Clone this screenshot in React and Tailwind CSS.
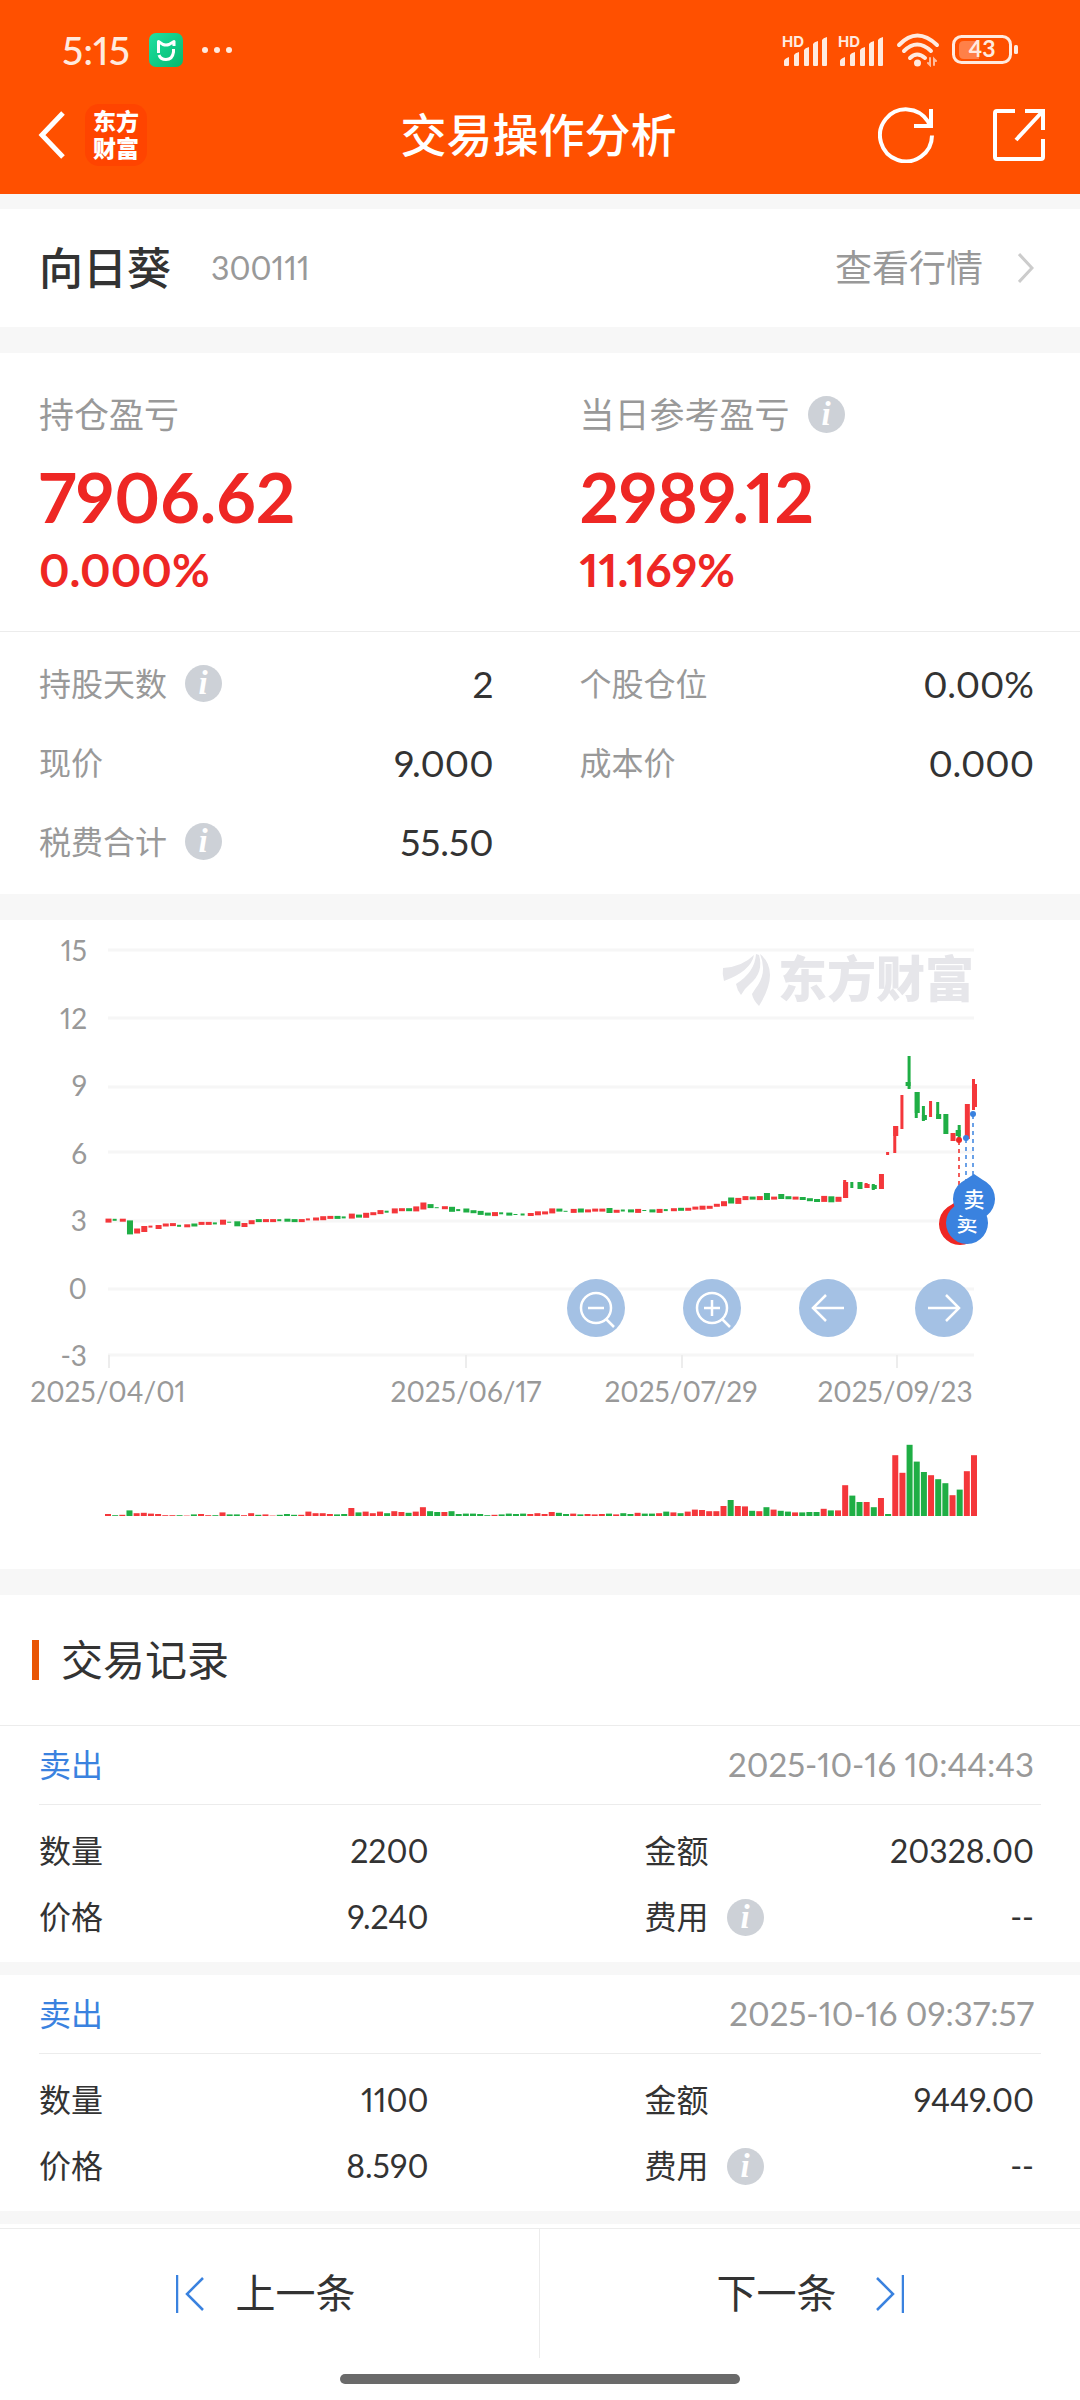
import { clsx } from "clsx";

const RED = "#f4373b";
const GREEN = "#1fae45";

// one entry per trading day: r = up, g = down, followed by the volume
const VOLUMES =
  "r5 g2 r3 g14 r7 r8 r6 r5 r2 r2 g2 r1 g4 r5 r2 g2 r9 g4 g4 r2 r7 g3 r4 r1 g3 g5 g3 r3 r11 r7 r7 r5 g4 g5 r20 g9 r11 r7 r11 g7 r12 r10 g8 r11 r22 g12 g10 r10 g12 g5 g6 g6 g5 g2 r3 g4 g6 g5 g6 r5 r7 r5 r10 g8 g5 r6 g4 r5 r4 r5 g6 r4 g7 g5 r8 g6 g6 r7 g11 r9 g7 r11 r16 r15 r12 r12 r25 g40 r25 r24 g13 r12 g22 r16 g13 g11 r9 g9 g10 g10 r18 g14 r14 r77 g51 g35 r35 g22 r45 g5 r152 r108 g178 g136 g110 r102 g92 g82 r52 g66 r112 r152"
    .split(" ")
    .map((v) => ({ up: v[0] === "r", size: Number(v.slice(1)) / 2.5 }));

// quiet part of the price line: [middle, body height]
const CANDLES = [
  [300.6, 4], [299.8, 2], [300.2, 3], [307.4, 14], [311, 5], [309, 6], [306.6, 2], [307, 4], [305, 3], [304.6, 3],
  [305.8, 2], [305.8, 3], [305, 3], [303.4, 3], [303.4, 3], [303.4, 2], [302.2, 5], [302.2, 1], [303.8, 5], [305, 4],
  [302.2, 4], [300.6, 3], [300.6, 3], [300.6, 3], [300.2, 2], [300.2, 3], [300.6, 3], [300.6, 3], [299.4, 2], [299, 3],
  [298.2, 4], [297.4, 3], [297.4, 3], [297.4, 2], [296.1, 5], [296.1, 3], [295.3, 5], [293.7, 3], [292.1, 4], [291.7, 2],
  [290.9, 5], [289.7, 3], [289.7, 3], [288.9, 5], [286, 7], [286.1, 4], [287.7, 1], [287.7, 3], [289.3, 5], [290.1, 2],
  [290.5, 4], [291.7, 3], [292.9, 4], [294.1, 3], [294.1, 4], [293.3, 2], [294.1, 3], [294.5, 1], [294.5, 2], [294.5, 3],
  [293.3, 4], [292.9, 3], [290.9, 5], [290.1, 3], [291.3, 1], [290.9, 4], [290.5, 4], [290.9, 3], [290.1, 3], [290.1, 3],
  [290.5, 5], [291.3, 3], [290.5, 2], [290.9, 3], [290.9, 4], [290.5, 1], [290.9, 3], [290.9, 4], [290.1, 2], [289.7, 3],
  [289.3, 3], [289.3, 3], [288.1, 3], [287.7, 4], [287.3, 3], [285.3, 3], [283.7, 5], [280.5, 6], [280.9, 6], [278.1, 4],
  [278.1, 3], [278.1, 4], [276.5, 7], [278.1, 3], [276.5, 5], [277.7, 3], [278.1, 3], [278.5, 3], [279.7, 3], [280.5, 3],
  [278.9, 6], [279.3, 6], [279.3, 5],
];

// volatile part: body and wick, both as [top, bottom]
const SWINGS = [
  { body: [262, 278], wick: [260, 278] },
  { wick: [262, 268] },
  { body: [262, 269] },
  { body: [264, 268], wick: [263, 268] },
  { body: [265, 269], wick: [264, 270] },
  { body: [254, 269] },
  { wick: [232, 235], fill: RED },
  { body: [206, 216], wick: [206, 233] },
  { wick: [175, 209] },
  { body: [162, 166], wick: [136, 169], side: -1 },
  { body: [172, 193], wick: [172, 198] },
  { body: [195, 200], wick: [186, 201] },
  { wick: [181, 197] },
  { body: [194, 199], wick: [182, 199] },
  { body: [194, 214] },
  { body: [213, 221] },
  { body: [210, 216], wick: [205, 218], side: -1 },
  { body: [184, 219] },
  { body: [164, 187], wick: [159, 190] },
];

const Y_AXIS = [
  { label: "15", line: 30, text: 41 },
  { label: "12", line: 98, text: 109 },
  { label: "9", line: 167, text: 176 },
  { label: "6", line: 232, text: 244 },
  { label: "3", line: 301, text: 311 },
  { label: "0", line: 369, text: 379 },
  { label: "-3", line: 435, text: 446 },
];

const X_AXIS = [
  { label: "2025/04/01", tick: 109, text: 108 },
  { label: "2025/06/17", tick: 466, text: 466 },
  { label: "2025/07/29", tick: 682, text: 681 },
  { label: "2025/09/23", tick: 897, text: 895 },
];

const RECORDS = [
  { side: "卖出", time: "2025-10-16 10:44:43", count: "2200", amount: "20328.00", price: "9.240", fee: "--" },
  { side: "卖出", time: "2025-10-16 09:37:57", count: "1100", amount: "9449.00", price: "8.590", fee: "--" },
];

const dayX = (i) => 108 + i * 7.157;

const InfoButton = ({ label }) => (
  <button type="button" aria-label={label} className="size-[37px] shrink-0">
    <svg viewBox="0 0 37 37" className="size-full">
      <circle cx="18.5" cy="18.5" r="18.5" fill="#cdd1d7" />
      <text x="18" y="29" textAnchor="middle" fill="#fff" className="font-['Liberation_Serif',serif] text-[33px] font-bold italic">
        i
      </text>
    </svg>
  </button>
);

const Signal = () => (
  <svg viewBox="0 0 48 32" className="h-8 w-12 overflow-visible" fill="#ffeadf">
    <text x="0" y="13" className="font-['Inter',sans-serif] text-[15px] font-bold">
      HD
    </text>
    <path d="M2 31v-4q0-2 5-4v8q0 1-1 1H3q-1 0-1-1zM12 31V21q1-2 5-3v13q0 1-1 1h-3q-1 0-1-1zM22 31V16q1-2 5-3v18q0 1-1 1h-3q-1 0-1-1zM31 31V10q1-2 5-3v24q0 1-1 1h-3q-1 0-1-1zM40 31V6q1-2 5-3v28q0 1-1 1h-3q-1 0-1-1z" />
  </svg>
);

const StatusBar = () => (
  <div className="flex items-center justify-between pt-8 pr-[62px] pl-[62px]">
    <div className="flex items-center gap-[19px]">
      <span className="text-[39px] leading-[36px] font-medium text-[#ffeadf]">5:15</span>
      <svg viewBox="0 0 34 34" className="size-[34px]">
        <defs>
          <linearGradient id="home" x1="0" y1="0" x2="1" y2="1">
            <stop offset="0" stopColor="#1fe0a3" />
            <stop offset="1" stopColor="#05b86c" />
          </linearGradient>
        </defs>
        <rect width="34" height="34" rx="7" fill="url(#home)" />
        <path
          d="M9.500 20V8.500l4.500 3q3 1 6 0l5-3V13"
          fill="none"
          stroke="#fff"
          strokeWidth="3"
          strokeLinejoin="round"
        />
        <path d="M24.500 16v3q-1 7.500-7.500 7.500-5.500 0-7-4.500" fill="none" stroke="#fff" strokeWidth="3" />
      </svg>
      <svg viewBox="0 0 30 6" className="h-[6px] w-[30px]" fill="#ffeadf">
        <circle cx="3" cy="3" r="3" />
        <circle cx="15" cy="3" r="3" />
        <circle cx="27" cy="3" r="3" />
      </svg>
    </div>
    <div className="flex items-center">
      <Signal />
      <span className="w-2" />
      <Signal />
      <svg viewBox="0 0 44 34" className="ml-[10px] h-[34px] w-11" fill="none" stroke="#ffeadf" strokeWidth="4" strokeLinecap="round">
        <path d="M3 12q18-19 38 0M8 18q13-13 27 0M14 25q7-7 15 0" />
        <circle cx="21.500" cy="30" r="2" fill="#ffeadf" strokeWidth="3" />
        <path d="M34 25v7l-2-2M38 32v-6l2 2" strokeWidth="2" opacity=".7" />
      </svg>
      <svg viewBox="0 0 66 30" className="ml-3 h-[30px] w-[66px]" fill="none">
        <rect x="1.500" y="1.500" width="57" height="26" rx="8" stroke="#ffeadf" strokeWidth="3" />
        <path d="M12 6h15v18H12q-5 0-5-5v-8q0-5 5-5z" fill="#ff8048" />
        <rect x="62" y="10" width="4" height="9" rx="1.500" fill="#ffeadf" />
        <text x="30" y="22" textAnchor="middle" fill="#ffeadf" className="text-[23px] font-bold">
          43
        </text>
      </svg>
    </div>
  </div>
);

const Header = () => (
  <header className="bg-[#ff5000] pb-7 text-white">
    <StatusBar />
    <div className="mt-9 grid grid-cols-[1fr_auto_1fr] items-center pr-[35px] pl-8">
      <div className="flex items-center gap-5">
        <button type="button" aria-label="返回">
          <svg viewBox="-6 0 33 48" className="h-12 w-[33px]" fill="none" stroke="#fff" strokeWidth="5">
            <path d="M25 2 4 24l21 22" />
          </svg>
        </button>
        <a href="#home" className="flex size-[62px] items-center justify-center rounded-[14px] bg-[#ff4400] text-[23px] leading-[27px] font-black">
          <span>
            东方
            <br />
            财富
          </span>
        </a>
      </div>
      <h1 className="text-[46px] leading-[62px] font-medium">交易操作分析</h1>
      <div className="flex items-center justify-end gap-[59px]">
        <button type="button" aria-label="刷新">
          <svg viewBox="0 0 56 56" className="size-14" fill="none" stroke="#fff" strokeWidth="4">
            <path d="M54 28.500A26 26 0 1 1 50 14.500L52 19" />
            <path d="M53 2v17H36" />
          </svg>
        </button>
        <button type="button" aria-label="分享">
          <svg viewBox="0 0 52 54" className="h-[54px] w-[52px]" fill="none" stroke="#fff" strokeWidth="4">
            <path d="M22 3H4q-2 0-2 2v44q0 2 2 2h44q2 0 2-2V31" />
            <path d="M32 3h18v19M49 4 23 32" />
          </svg>
        </button>
      </div>
    </div>
  </header>
);

const Summary = ({ title, info, value, percent }) => (
  <div>
    <div className="flex h-[37px] items-center gap-[18px]">
      <h2 className="text-[35px] leading-[37px] text-[#999]">{title}</h2>
      {info && <InfoButton label={title} />}
    </div>
    <p className="mt-5 text-[69px] leading-[88px] font-bold">{value}</p>
    <p className="text-[46px] leading-[58px] font-bold">{percent}</p>
  </div>
);

const Stat = ({ label, value, info }) => (
  <div className="flex h-[79px] items-center justify-between">
    <dt className="flex items-center gap-[18px] text-[32px] text-[#999]">
      {label}
      {info && <InfoButton label={label} />}
    </dt>
    <dd className="text-[37px]">{value}</dd>
  </div>
);

const RecordField = ({ label, value, info }) => (
  <div className="flex h-[66px] items-center justify-between">
    <dt className="flex items-center gap-[18px] text-[32px]">
      {label}
      {info && <InfoButton label={label} />}
    </dt>
    <dd className="text-[32px]">{value}</dd>
  </div>
);

const Pin = ({ x, y, color, text }) => (
  <g>
    <path d={`M${x} ${y - 25}l9 6a21 21 0 1 1-18 0z`} fill={color} />
    {text && (
      <text x={x} y={y + 8} textAnchor="middle" fill="#fff" className="text-[21px] font-medium">
        {text}
      </text>
    )}
  </g>
);

const Chart = () => (
  <svg viewBox="0 0 1080 649" className="block w-full" role="img" aria-label="价格走势">
    {Y_AXIS.map((row) => (
      <g key={row.label}>
        <line x1="108" x2="974" y1={row.line} y2={row.line} stroke="#f6f6f6" strokeWidth="3" />
        <text x="87" y={row.text} textAnchor="end" fill="#999" className="text-[28px]">
          {row.label}
        </text>
      </g>
    ))}
    {X_AXIS.map((col) => (
      <g key={col.label}>
        <line x1={col.tick} x2={col.tick} y1="435" y2="448" stroke="#ededed" strokeWidth="2" />
        <text x={col.text} y="482" textAnchor="middle" fill="#999" className="text-[28px]">
          {col.label}
        </text>
      </g>
    ))}

    <g fill="#e6e6ea">
      <path d="M723 48q19-1 31-13-3 16-30 26-2-7-1-13z" />
      <path d="M736 64q19-12 20-30l3 1q5 17-9 29-5 4-9 11-4-5-5-11z" />
      <path d="M760 34q10 8 10 21 0 13-11 31-6-6-7-12 3-5 6-9 9-14 2-31z" />
      <text x="778" y="77" className="text-[49px] font-black">
        东方财富
      </text>
    </g>

    {CANDLES.map(([mid, h], i) => (
      <rect key={i} x={dayX(i) - 2.5} y={mid - h / 2} width={h < 3 ? 4 : 6} height={h} fill={VOLUMES[i].up ? RED : GREEN} />
    ))}
    {SWINGS.map(({ body, wick, fill, side = 1 }, n) => {
      const i = CANDLES.length + n;
      const x = dayX(i);
      return (
        <g key={i} fill={fill || (VOLUMES[i].up ? RED : GREEN)}>
          {wick && <rect x={x - 2} y={wick[0]} width="3" height={wick[1] - wick[0]} />}
          {body && <rect x={side > 0 ? x - 2 : x - 4} y={body[0]} width="5" height={body[1] - body[0]} />}
        </g>
      );
    })}
    {VOLUMES.map((v, i) => (
      <rect key={i} x={dayX(i) - 3} y={596 - v.size} width="6" height={v.size} fill={v.up ? RED : GREEN} />
    ))}

    <g strokeWidth="1.500" strokeDasharray="4 4">
      <path d="M959 221v70" stroke="#ee2724" />
      <path d="M966 219v60M973 195v60" stroke="#3a82df" />
    </g>
    <circle cx="959" cy="220" r="3" fill="#ee2724" />
    <circle cx="966" cy="218" r="3" fill="#3a82df" />
    <circle cx="973" cy="194" r="3" fill="#3a82df" />
    <Pin x={960} y={304} color="#ee2724" />
    <Pin x={967} y={303} color="#3a82df" text="卖" />
    <Pin x={974} y={279} color="#3a82df" text="卖" />
  </svg>
);

const CHART_BUTTONS = [
  { label: "缩小", icon: "M39 40l8 8M21 29h16", lens: true },
  { label: "放大", icon: "M39 40l8 8M21 29h16M29 21v16", lens: true },
  { label: "左移", icon: "M45 29H14M27 16 14 29l13 13" },
  { label: "右移", icon: "M13 29h31M31 16l13 13-13 13" },
];

const Gap = ({ className }) => <div className={clsx("bg-[#f7f7f7]", className)} />;

const App = () => {
  return (
    <div className="min-h-screen bg-white font-['Lato','Noto_Sans_CJK_SC',sans-serif] text-[#333] proportional-nums">
      <Header />
      <Gap className="h-[15px]" />

      <section className="flex h-[118px] items-center justify-between pr-[46px] pl-[39px]">
        <div className="flex items-center gap-10">
          <h2 className="text-[44px] font-medium">向日葵</h2>
          <span className="text-[32px] text-[#999]">300111</span>
        </div>
        <a href="#quote" className="flex items-center gap-[35px] text-[37px] text-[#999]">
          查看行情
          <svg viewBox="0 0 16 30" className="h-[30px] w-4" fill="none" stroke="#ccc" strokeWidth="3">
            <path d="m1 1 13 14L1 29" />
          </svg>
        </a>
      </section>
      <Gap className="h-[26px]" />

      <section>
        <div className="grid grid-cols-2 gap-x-[86px] border-b border-[#ececec] pt-[43px] pr-[46px] pb-[32px] pl-[39px] text-[#ee2724]">
          <Summary title="持仓盈亏" value="7906.62" percent="0.000%" />
          <Summary title="当日参考盈亏" value="2989.12" percent="11.169%" info />
        </div>
        <dl className="grid grid-cols-2 gap-x-[86px] pt-3 pr-[46px] pb-[13px] pl-[39px]">
          <Stat label="持股天数" value="2" info />
          <Stat label="个股仓位" value="0.00%" />
          <Stat label="现价" value="9.000" />
          <Stat label="成本价" value="0.000" />
          <Stat label="税费合计" value="55.50" info />
        </dl>
      </section>
      <Gap className="h-[26px]" />

      <section className="relative">
        <Chart />
        <div className="absolute top-[359px] right-[107px] flex gap-[58px]">
          {CHART_BUTTONS.map((btn) => (
            <button key={btn.label} type="button" aria-label={btn.label} className="size-[58px] rounded-full bg-[#a4c1e4]">
              <svg viewBox="0 0 58 58" className="size-full" fill="none" stroke="#fff" strokeWidth="2.500">
                {btn.lens && <circle cx="29" cy="29" r="15" />}
                <path d={btn.icon} />
              </svg>
            </button>
          ))}
        </div>
      </section>
      <Gap className="h-[26px]" />

      <section>
        <div className="flex h-[131px] items-center gap-[22px] border-b border-[#ececec] pl-8">
          <span className="h-10 w-[7px] bg-[#e95504]" />
          <h2 className="text-[42px]">交易记录</h2>
        </div>
        {RECORDS.map((rec) => (
          <article key={rec.time}>
            <div className="mx-[39px] flex h-[79px] items-center justify-between border-b border-[#ececec] pr-[7px]">
              <h3 className="text-[32px] text-[#3a82df]">{rec.side}</h3>
              <time className="text-[33px] text-[#999]">{rec.time}</time>
            </div>
            <dl className="grid grid-cols-2 gap-x-[216px] pt-[13px] pr-[46px] pb-3 pl-[39px]">
              <RecordField label="数量" value={rec.count} />
              <RecordField label="金额" value={rec.amount} />
              <RecordField label="价格" value={rec.price} />
              <RecordField label="费用" value={rec.fee} info />
            </dl>
            <Gap className="h-[13px]" />
          </article>
        ))}
      </section>

      <nav className="mt-1 grid grid-cols-2 border-t border-[#ececec] text-[40px] leading-[129px]">
        <button type="button" className="flex items-center justify-center gap-8 border-r border-[#ececec] pr-2">
          <svg viewBox="0 0 28 38" className="h-[38px] w-7" fill="none" stroke="#3a82df" strokeWidth="2.500">
            <path d="M1 0v38M27 3 11 19l16 16" />
          </svg>
          上一条
        </button>
        <button type="button" className="flex items-center justify-center gap-[39px]">
          下一条
          <svg viewBox="0 0 28 38" className="h-[38px] w-7" fill="none" stroke="#3a82df" strokeWidth="2.500">
            <path d="M27 0v38M1 3l16 16L1 35" />
          </svg>
        </button>
      </nav>
      <div className="flex justify-center pt-4 pb-4">
        <span className="h-[10px] w-[400px] rounded-full bg-[#6a6a6a]" />
      </div>
    </div>
  );
};

export default App;
